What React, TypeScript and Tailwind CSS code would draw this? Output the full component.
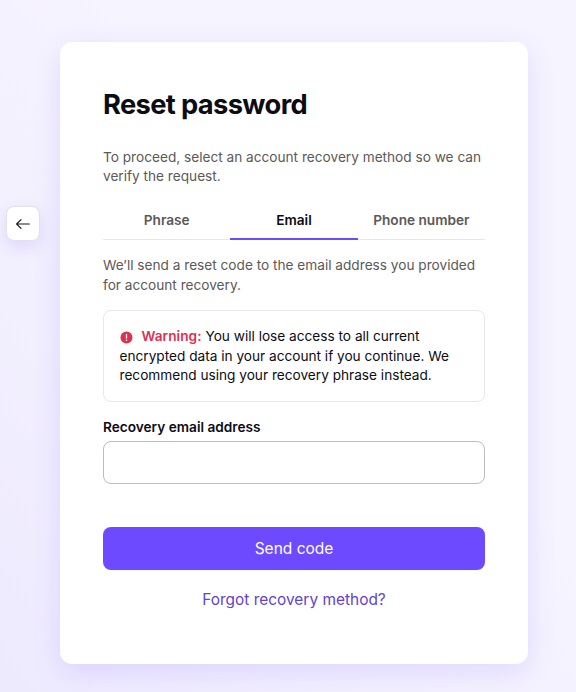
import { useState } from 'react'

const tabs = ['Phrase', 'Email', 'Phone number']

function BackButton() {
  return (
    <button
      aria-label="Back"
      className="mt-[164px] flex h-[35px] w-[34px] shrink-0 items-center justify-center rounded-lg border border-[#e4dfec] bg-white text-[#1b1a20] shadow-[0_6px_16px_rgba(109,74,255,0.14)]"
    >
      <svg width="16" height="16" viewBox="0 0 16 16" fill="none" stroke="currentColor" strokeWidth="1.2" strokeLinecap="round" strokeLinejoin="round">
        <path d="M14.3 8H1.6M6 3.6L1.6 8L6 12.4" />
      </svg>
    </button>
  )
}

function WarningIcon() {
  return (
    <svg className="mr-[9px] inline-block align-[-2.5px]" width="13" height="13" viewBox="0 0 13 13">
      <circle cx="6.5" cy="6.5" r="6" fill="#dc3251" />
      <path d="M6.5 3.4v3.7" stroke="#fff" strokeWidth="1.2" strokeLinecap="round" />
      <circle cx="6.5" cy="9.2" r="0.8" fill="#fff" />
    </svg>
  )
}

export default function App() {
  const [active, setActive] = useState('Email')
  const [email, setEmail] = useState('')

  return (
    <div className="flex h-[692px] w-full items-start gap-5 overflow-hidden bg-gradient-to-tr from-[#eeeafe] to-[#f6f4ff] to-60% pt-[42px] pl-[6px] font-['Inter',sans-serif] text-[13.65px] leading-[19.5px] text-[#0c0c14]">
      <BackButton />

      <main className="h-[622px] w-[468px] shrink-0 rounded-xl bg-white px-[43px] pt-[45px] shadow-[0_8px_28px_rgba(109,74,255,0.15)]">
        <h1 className="text-[27.3px] leading-[36px] font-bold tracking-[-0.64px]">Reset password</h1>
        <p className="mt-[24.5px] text-[#5c5958]">
          To proceed, select an account recovery method so we can verify the request.
        </p>

        <div className="mt-[13.5px] flex h-10 border-b border-[#e8e7e6]" role="tablist">
          {tabs.map((tab) => (
            <button
              key={tab}
              role="tab"
              aria-selected={tab === active}
              onClick={() => setActive(tab)}
              className={`-mb-px flex-1 border-b-2 pt-[3px] font-semibold ${
                tab === active ? 'border-[#6d4aff]' : 'border-transparent text-[#5c5958]'
              }`}
            >
              {tab}
            </button>
          ))}
        </div>

        <p className="mt-4 text-[#5c5958]">
          We’ll send a reset code to the email address you provided for account recovery.
        </p>

        <div className="mt-[15px] h-[92px] rounded-lg border border-[#eae7e4] pt-4 pr-4 pl-[15.5px]">
          <WarningIcon />
          <strong className="font-semibold tracking-[0.05px] text-[#dc3251]">Warning:</strong> You will lose access to all current
          encrypted data in your account if you continue. We recommend using your recovery phrase instead.
        </div>

        <label className="mt-4 block font-semibold" htmlFor="email">
          Recovery email address
        </label>
        <input
          id="email"
          type="email"
          value={email}
          onChange={(e) => setEmail(e.target.value)}
          className="mt-[3px] block h-[43px] w-full rounded-lg border border-[#bfbdbb] px-3 outline-none"
        />

        <button className="mt-[43.5px] block h-[43px] w-full rounded-lg bg-[#6d4aff] text-[15.5px] text-white">
          Send code
        </button>
        <button className="mt-[18px] block w-full text-[15.45px] leading-6 text-[#6243cf]">
          Forgot recovery method?
        </button>
      </main>
    </div>
  )
}
